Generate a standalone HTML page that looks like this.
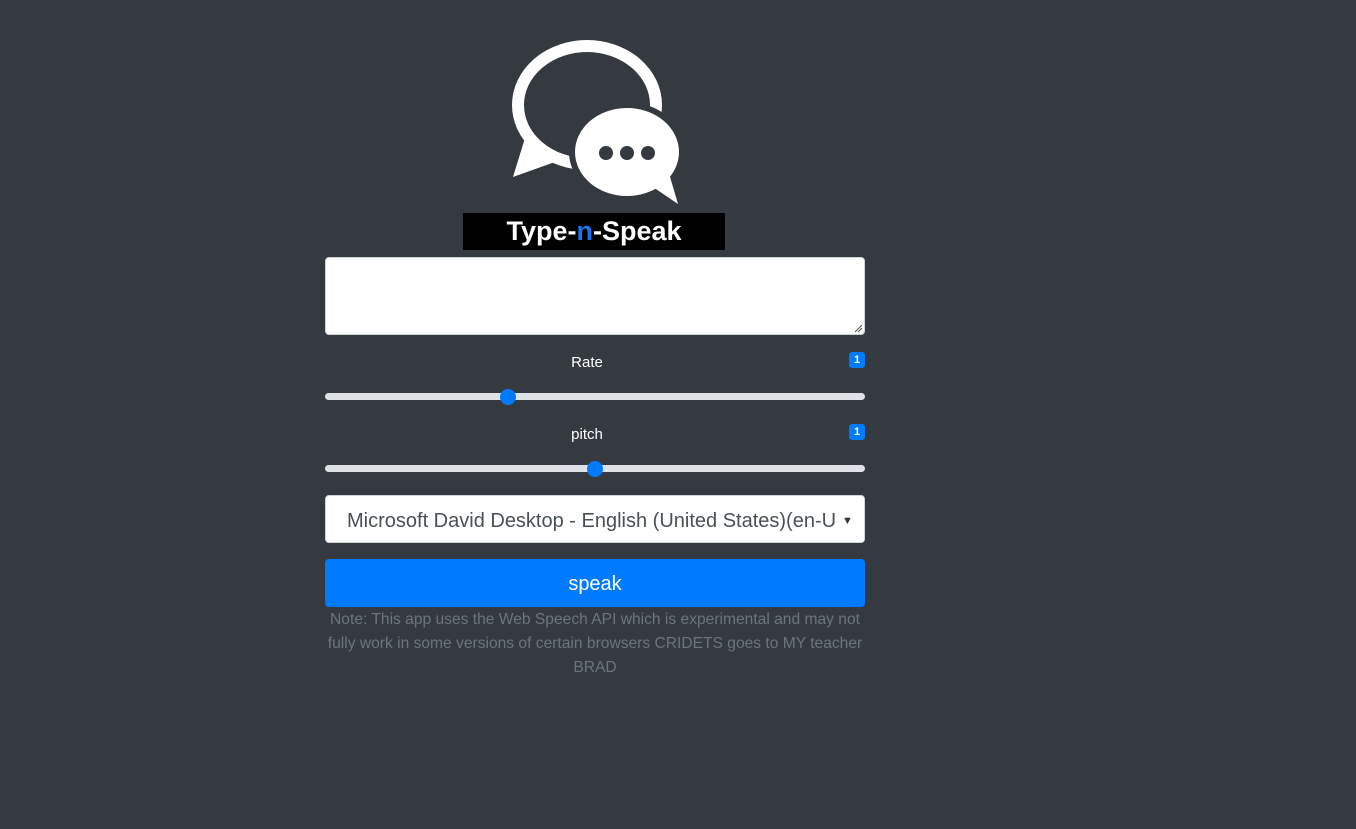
<!DOCTYPE html>
<html><head><style>
body{margin:0;background:#343a40;width:1356px;height:829px;overflow:hidden;font-family:"Liberation Sans",sans-serif;position:relative}
.a{position:absolute}
.banner{left:463px;top:213px;width:262px;height:37px;background:#000;color:#fff;font-weight:bold;font-size:27px;text-align:center;line-height:37px}
.ta{left:325px;top:257px;width:538px;height:76px;background:#fff;border:1px solid #ced4da;border-radius:4px}
.lbl{text-align:center;color:#fff;font-size:15px;left:0}
.badge{width:16px;height:16px;background:#007bff;border-radius:3px;color:#fff;font-size:11px;font-weight:bold;text-align:center;line-height:16px;left:849px}
.track{left:325px;width:540px;height:7px;background:#dee2e6;border-radius:4px}
.thumb{width:16px;height:16px;border-radius:50%;background:#007bff}
.sel{left:325px;top:495px;background:#fff;border:1px solid #ced4da;border-radius:4px;color:#495057;font-size:20px;line-height:50px;padding-left:21px;box-sizing:border-box;width:540px;height:48px;white-space:nowrap;overflow:hidden}
.btn{left:325px;top:559px;width:540px;height:48px;background:#007bff;border-radius:4px;color:#fff;font-size:20px;text-align:center;line-height:50px}
.note{left:323px;top:608px;width:544px;text-align:center;color:#6c757d;font-size:15.6px;line-height:24px}
</style></head><body>
<svg class="a" style="left:0;top:0" width="1356" height="260">
<ellipse cx="587" cy="105" rx="69" ry="59" fill="none" stroke="#fff" stroke-width="12"/>
<polygon points="525,138 513,177 566,158 545,148" fill="#fff"/>
<ellipse cx="627" cy="152" rx="55" ry="47" fill="#fff" stroke="#343a40" stroke-width="6"/>
<polygon points="650,185 678,204 668,170" fill="#fff"/>
<circle cx="606" cy="153" r="7" fill="#343a40"/><circle cx="627" cy="153" r="7" fill="#343a40"/><circle cx="648" cy="153" r="7" fill="#343a40"/>
</svg>
<div class="a banner">Type-<span style="color:#1a73e8">n</span>-Speak</div>
<div class="a ta"><svg class="a" style="right:1px;bottom:1px" width="9" height="9"><path d="M1,8 L8,1 M4,8 L8,4" stroke="#555" stroke-width="1"/></svg></div>
<div class="a lbl" style="width:1174px;top:354px">Rate</div>
<div class="a badge" style="top:352px">1</div>
<div class="a track" style="top:393px"></div>
<div class="a thumb" style="left:500px;top:389px"></div>
<div class="a lbl" style="width:1174px;top:426px">pitch</div>
<div class="a badge" style="top:424px">1</div>
<div class="a track" style="top:465px"></div>
<div class="a thumb" style="left:587px;top:461px"></div>
<div class="a sel">Microsoft David Desktop - English (United States)(en-U<span class="a" style="right:0;top:0;width:22px;background:#fff;font-size:11px;color:#333">▼</span></div>
<div class="a btn">speak</div>
<div class="a note">Note: This app uses the Web Speech API which is experimental and may not fully work in some versions of certain browsers CRIDETS goes to MY teacher BRAD</div>
</body></html>
